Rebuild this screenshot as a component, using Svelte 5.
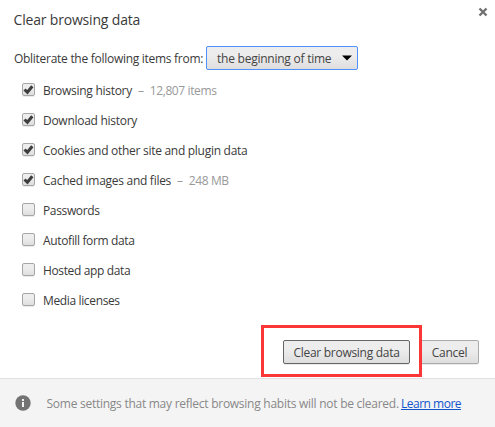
<script>
  let items = $state([
    { label: 'Browsing history', detail: '12,807 items', checked: true },
    { label: 'Download history', checked: true },
    { label: 'Cookies and other site and plugin data', checked: true },
    { label: 'Cached images and files', detail: '248 MB', checked: true },
    { label: 'Passwords', checked: false },
    { label: 'Autofill form data', checked: false },
    { label: 'Hosted app data', checked: false },
    { label: 'Media licenses', checked: false }
  ]);
</script>

<div class="dialog">
  <header>
    <h1>Clear browsing data</h1>
    <button class="close" aria-label="Close">
      <svg width="10" height="10" viewBox="0 0 10 10"><path d="M1.5 1.5 8.5 8.5M8.5 1.5 1.5 8.5" stroke="#717171" stroke-width="2.4" /></svg>
    </button>
  </header>
  <div class="period">
    <span class="prompt">Obliterate the following items from:</span>
    <button class="select">
      <span>the beginning of time</span>
      <svg width="10" height="6" viewBox="0 0 10 6"><path d="M0 0.5H10L5 5.5Z" fill="#000" /></svg>
    </button>
  </div>
  <div class="list">
    {#each items as item}
      <label>
        <input type="checkbox" bind:checked={item.checked} />
        <span class="box">
          {#if item.checked}
            <svg width="11" height="11" viewBox="0 0 11 11"><path d="M1.5 5.5 4.4 8.3 9.3 2.2" fill="none" stroke="#3d3d3d" stroke-width="3" /></svg>
          {/if}
        </span>
        <span class="name" class:tight={!item.checked}>{item.label}</span>
        {#if item.detail}
          <span class="dash">–</span><span class="detail">{item.detail}</span>
        {/if}
      </label>
    {/each}
  </div>
  <div class="actions">
    <div class="highlight"><button class="push primary">Clear browsing data</button></div>
    <button class="push cancel">Cancel</button>
  </div>
  <footer>
    <svg width="16" height="16" viewBox="0 0 16 16"><circle cx="8" cy="8" r="7.7" fill="#737373" /><path d="M7 4h2v2H7zM7 7h2v5H7z" fill="#f4f4f4" /></svg>
    <span class="note">Some settings that may reflect browsing habits will not be cleared.</span>
    <a href="#learn">Learn more</a>
  </footer>
</div>

<style>
  :global(body) { background: #fff; }
  .dialog {
    width: 495px; height: 427px; display: flex; flex-direction: column; overflow: hidden;
    font: 12px/16px "Open Sans", "Noto Sans", sans-serif; color: #3a3a3a; letter-spacing: -0.28px;
    white-space: nowrap;
  }
  button { font: inherit; letter-spacing: inherit; color: #444; margin: 0; padding: 0; box-sizing: border-box; }
  header { display: flex; justify-content: space-between; height: 46px; padding-left: 13.5px; box-sizing: border-box; }
  h1 { margin: 10px 0 0; font-size: 14px; line-height: 20px; font-weight: 400; letter-spacing: -0.18px; }
  .close { display: flex; width: 10px; height: 10px; margin: 7px 7px 0 0; border: 0; background: none; }
  .period { display: flex; height: 24px; align-items: center; padding-left: 14px; }
  .prompt { width: 192px; padding-top: 1px; }
  .select {
    display: flex; align-items: center; width: 152px; height: 24px; border: 1px solid #4d90fe;
    border-radius: 2px; padding: 0 5px 0 10px; justify-content: space-between; letter-spacing: -0.24px;
    background: linear-gradient(#ededed 38%, #dedede);
  }
  .select span { padding-top: 2px; }
  .list { padding: 5px 0 0 22px; height: 240px; }
  label { display: flex; height: 30px; align-items: center; }
  input { position: absolute; opacity: 0; }
  .box {
    width: 13px; height: 13px; box-sizing: border-box; border: 1px solid #a6a6a6; border-radius: 2px;
    background: linear-gradient(#ededed 38%, #dedede); box-shadow: 0 1px 0 rgba(0,0,0,.08);
    margin: 0 8px 2px 0; display: flex; flex: none;
  }
  .name, .dash, .detail { padding-top: 2px; }
  .name.tight { letter-spacing: -0.36px; }
  .dash { color: #999; margin-left: 6px; }
  .detail { color: #999; margin-left: 6px; letter-spacing: -0.38px; }
  .actions { display: flex; align-items: flex-start; padding: 10px 0 0 261px; height: 53px; }
  .highlight { width: 161px; height: 52px; box-sizing: border-box; border: 3px solid #fb3636; padding: 12px 0 0 19px; z-index: 1; }
  .push {
    display: block; height: 24px; border: 1px solid #aaa; border-radius: 2px; padding-top: 1px;
    background: linear-gradient(#ededed 38%, #dedede); box-shadow: 0 1px 0 rgba(0,0,0,.08);
  }
  .primary { width: 127px; border-color: #666; }
  .cancel { width: 60px; margin: 15px 0 0 -3px; padding-left: 1px; }
  footer { display: flex; align-items: center; flex: 1; border-top: 1px solid #e0e0e0; background: #f4f4f4; padding: 2px 0 0 15px; color: #888; }
  footer svg { margin-bottom: 2px; }
  .note { margin-left: 15.5px; width: 354.5px; letter-spacing: -0.26px; }
  a { color: #15c; letter-spacing: -0.5px; text-decoration-skip-ink: none; }
</style>
